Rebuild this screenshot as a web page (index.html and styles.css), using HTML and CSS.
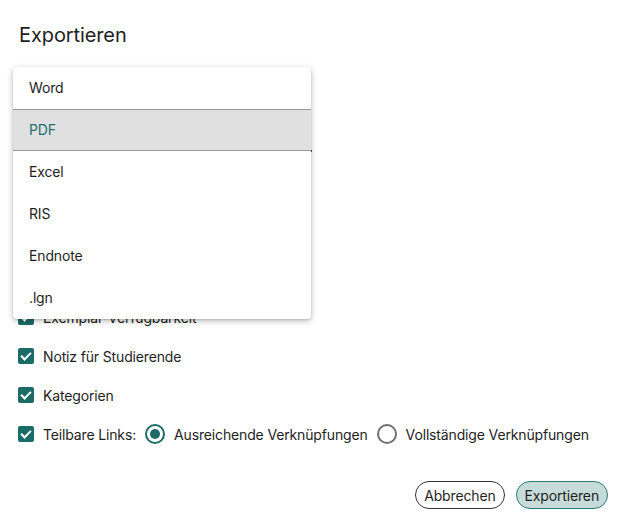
FILE: index.html
```html
<!DOCTYPE html>
<html lang="de">
<head>
  <meta charset="UTF-8" />
  <title>Exportieren</title>
  <meta name="viewport" content="width=device-width, initial-scale=1" />
  <link rel="stylesheet" href="styles.css">
</head>
<body>

<div class="dialog">
  <h2 class="dialog-title">Exportieren</h2>

  <div class="field">
    <span class="field-value">PDF</span>
  </div>

  <div class="options">
    <label class="check-row"><span class="checkbox"></span>Titel</label>
    <label class="check-row"><span class="checkbox"></span>Autor</label>
    <label class="check-row"><span class="checkbox"></span>Signatur</label>
    <label class="check-row"><span class="checkbox"></span>Exemplar-Verfügbarkeit</label>
    <label class="check-row"><span class="checkbox"></span>Notiz für Studierende</label>
    <label class="check-row"><span class="checkbox"></span>Kategorien</label>
    <div class="check-row">
      <span class="checkbox"></span>Teilbare Links:
      <span class="radio checked"></span>Ausreichende Verknüpfungen
      <span class="radio"></span>Vollständige Verknüpfungen
    </div>
  </div>

  <div class="actions">
    <button class="btn">Abbrechen</button>
    <button class="btn primary">Exportieren</button>
  </div>

  <ul class="menu">
    <li>Word</li>
    <li class="selected">PDF</li>
    <li>Excel</li>
    <li>RIS</li>
    <li>Endnote</li>
    <li>.lgn</li>
  </ul>
</div>

</body>
</html>
```

FILE: styles.css
```css
body {
  margin: 0;
  font-family: Inter, Roboto, "Liberation Sans", sans-serif;
  font-size: 14px;
  letter-spacing: -0.15px;
  color: #1e1e1e;
  background: #fff;
}
.dialog {
  position: relative;
  padding: 23px 22px 0 19px;
}
.dialog-title {
  margin: 0;
  font-size: 20px;
  font-weight: 400;
  line-height: 24px;
  letter-spacing: -0.1px;
}

.field {
  margin: 64px 0 0 -6px;
  width: 299px;
  height: 41px;
  box-sizing: border-box;
  border-bottom: 2px solid #1b6e6a;
}
.field-value {
  display: none;
}

.options {
  display: flex;
  flex-direction: column;
  gap: 15px;
  margin-top: 36px;
}
.check-row {
  display: flex;
  align-items: center;
  height: 24px;
  margin-left: -1px;
}
.checkbox {
  width: 16px;
  height: 16px;
  border-radius: 2px;
  background: #1b6b67;
  margin-right: 9px;
  position: relative;
}
.checkbox::after {
  content: "";
  position: absolute;
  left: 5px;
  top: 2px;
  width: 4px;
  height: 8px;
  border: solid #fff;
  border-width: 0 2px 2px 0;
  transform: rotate(45deg);
}
.radio {
  width: 20px;
  height: 20px;
  box-sizing: border-box;
  border-radius: 50%;
  border: 2px solid #6f6f6f;
  margin: 0 9px 0 9px;
  position: relative;
}
.radio.checked {
  border-color: #1b6b67;
}
.radio.checked::after {
  content: "";
  position: absolute;
  left: 3px;
  top: 3px;
  width: 10px;
  height: 10px;
  border-radius: 50%;
  background: #1b6b67;
}

.actions {
  display: flex;
  justify-content: flex-end;
  gap: 11px;
  margin-top: 35px;
}
.btn {
  font-family: inherit;
  font-size: 14px;
  letter-spacing: -0.15px;
  color: #1e1e1e;
  height: 28px;
  padding: 0 8px;
  border-radius: 14px;
  border: 1px solid #333;
  background: #fff;
}
.btn.primary {
  background: #c7dcda;
  border-color: #2a7a75;
}

.menu {
  position: absolute;
  left: 13px;
  top: 67px;
  width: 298px;
  margin: 0;
  padding: 0;
  list-style: none;
  background: #fff;
  border-radius: 4px;
  box-shadow: 0 2px 6px rgba(0, 0, 0, 0.25), 0 1px 2px rgba(0, 0, 0, 0.12);
}
.menu li {
  height: 42px;
  line-height: 42px;
  padding-left: 16px;
}
.menu li.selected {
  background: #e0e0e0;
  color: #1c6f73;
  border-top: 1px solid #999;
  border-bottom: 1px solid #999;
  height: 40px;
  line-height: 40px;
}
```
